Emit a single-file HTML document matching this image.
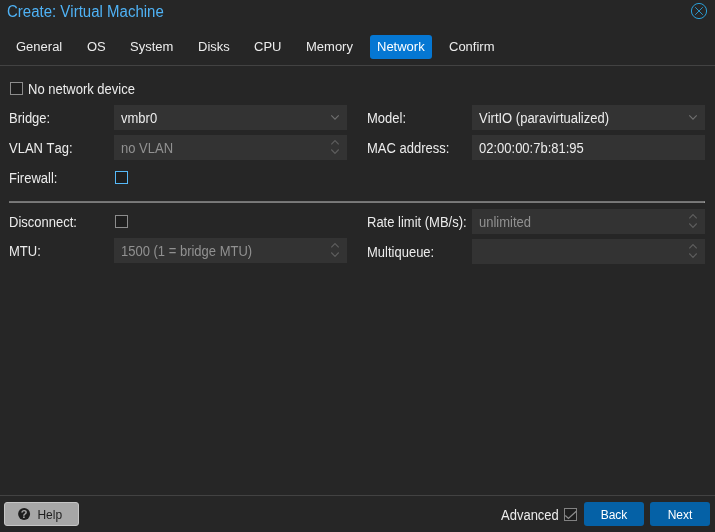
<!DOCTYPE html>
<html><head><meta charset="utf-8">
<style>
*{box-sizing:border-box;margin:0;padding:0}
html,body{font-kerning:none;width:715px;height:532px;overflow:hidden;background:#262626;font-family:"Liberation Sans",Helvetica,Arial,sans-serif;color:#ececec;font-size:13px}
#win{will-change:transform;position:relative;width:715px;height:532px;background:#262626}
.abs{position:absolute}
#title{transform:scaleY(1.04);transform-origin:0 14px;left:7px;top:3px;font-size:15px;line-height:18px;color:#4fb2f5;white-space:nowrap}
#tabbar{left:0;top:29px;width:715px;height:37px;border-bottom:1px solid #424242}
.tab{position:absolute;top:6px;height:24px;line-height:24px;font-size:13px;color:#ececec;padding:0 8px;border-radius:3px;white-space:nowrap}
.tab span{display:inline-block;transform:scaleY(1.04);transform-origin:0 16.5px}
.tab.act{background:#0577d3;color:#fff;padding:0 7px}
.lbl{transform:scaleY(1.065);transform-origin:0 16.5px;position:absolute;font-size:13px;line-height:24px;height:24px;color:#ececec;white-space:nowrap}
.fld{position:absolute;height:25px;background:#333;font-size:13px;line-height:25px;color:#ececec;padding-left:7px;white-space:nowrap}
.fld span{position:relative;top:1px;display:inline-block;transform:scaleY(1.065);transform-origin:0 17.3px}
.fld.dis{color:#919191}
.cb{position:absolute;width:13px;height:13px;border:1px solid #8c8c8c;background:#1e1e1e}
.cb.foc{border-color:#56b9f8}
#hr{left:9px;top:201px;width:696px;height:2px;background:#7a7a7a;border-top:1px solid #747474;border-right:1px solid #969696}
#foot{left:0;top:495px;width:715px;height:1px;background:#424242}
.btn{position:absolute;top:502px;height:24px;line-height:26px;font-size:12px;border-radius:3px;text-align:center;white-space:nowrap}
.btn.blue{background:#0561a6;color:#fff}
#help{left:4px;width:75px;background:#a7a7a7;color:#1e1e1e;border:1px solid #c6c6c6}
svg{position:absolute;overflow:visible}
</style></head><body>
<div id="win">
<div id="title" class="abs">Create: Virtual Machine</div>
<svg style="left:691px;top:3px" width="16" height="16" viewBox="0 0 16 16"><circle cx="8" cy="8" r="7.6" fill="none" stroke="#2b9fd8" stroke-width="1"/><path d="M4.2 4.2 L11.8 11.8 M11.8 4.2 L4.2 11.8" stroke="#2b9fd8" stroke-width="0.9" fill="none"/></svg>

<div id="tabbar" class="abs">
<div class="tab" style="left:8px"><span>General</span></div>
<div class="tab" style="left:79px"><span>OS</span></div>
<div class="tab" style="left:122px"><span>System</span></div>
<div class="tab" style="left:190px"><span>Disks</span></div>
<div class="tab" style="left:246px"><span>CPU</span></div>
<div class="tab" style="left:298px"><span>Memory</span></div>
<div class="tab act" style="left:370px"><span>Network</span></div>
<div class="tab" style="left:441px"><span>Confirm</span></div>
</div>

<div class="cb" style="left:10px;top:82px"></div>
<div class="lbl" style="left:28px;top:78px">No network device</div>

<div class="lbl" style="left:9px;top:107px">Bridge:</div>
<div class="fld" style="left:114px;top:105px;width:233px"><span>vmbr0</span></div>
<svg style="left:330px;top:105px" width="10" height="25" viewBox="0 0 10 25"><path d="M1.3 10.4 L5 14.2 L8.7 10.4" stroke="#707070" stroke-width="1.1" fill="none"/></svg>

<div class="lbl" style="left:9px;top:137px">VLAN Tag:</div>
<div class="fld dis" style="left:114px;top:135px;width:233px"><span>no VLAN</span></div>
<svg style="left:330px;top:135px" width="10" height="25" viewBox="0 0 10 25"><path d="M1.3 9.4 L5 5.5 L8.7 9.4 M1.3 14.5 L5 18.4 L8.7 14.5" stroke="#5e5e5e" stroke-width="1.1" fill="none"/></svg>

<div class="lbl" style="left:9px;top:167px">Firewall:</div>
<div class="cb foc" style="left:115px;top:171px"></div>

<div class="lbl" style="left:367px;top:107px">Model:</div>
<div class="fld" style="left:472px;top:105px;width:233px"><span>VirtIO (paravirtualized)</span></div>
<svg style="left:688px;top:105px" width="10" height="25" viewBox="0 0 10 25"><path d="M1.3 10.4 L5 14.2 L8.7 10.4" stroke="#707070" stroke-width="1.1" fill="none"/></svg>

<div class="lbl" style="left:367px;top:137px">MAC address:</div>
<div class="fld" style="left:472px;top:135px;width:233px"><span>02:00:00:7b:81:95</span></div>

<div id="hr" class="abs"></div>

<div class="lbl" style="left:9px;top:211px">Disconnect:</div>
<div class="cb" style="left:115px;top:215px"></div>

<div class="lbl" style="left:9px;top:240px">MTU:</div>
<div class="fld dis" style="left:114px;top:238px;width:233px"><span>1500 (1 = bridge MTU)</span></div>
<svg style="left:330px;top:238px" width="10" height="25" viewBox="0 0 10 25"><path d="M1.3 9.4 L5 5.5 L8.7 9.4 M1.3 14.5 L5 18.4 L8.7 14.5" stroke="#5e5e5e" stroke-width="1.1" fill="none"/></svg>

<div class="lbl" style="left:367px;top:211px">Rate limit (MB/s):</div>
<div class="fld dis" style="left:472px;top:209px;width:233px"><span>unlimited</span></div>
<svg style="left:688px;top:209px" width="10" height="25" viewBox="0 0 10 25"><path d="M1.3 9.4 L5 5.5 L8.7 9.4 M1.3 14.5 L5 18.4 L8.7 14.5" stroke="#5e5e5e" stroke-width="1.1" fill="none"/></svg>

<div class="lbl" style="left:367px;top:241px">Multiqueue:</div>
<div class="fld dis" style="left:472px;top:239px;width:233px"></div>
<svg style="left:688px;top:239px" width="10" height="25" viewBox="0 0 10 25"><path d="M1.3 9.4 L5 5.5 L8.7 9.4 M1.3 14.5 L5 18.4 L8.7 14.5" stroke="#5e5e5e" stroke-width="1.1" fill="none"/></svg>

<div id="foot" class="abs"></div>
<div id="help" class="btn"><span style="position:absolute;left:32.4px;top:-1px">Help</span></div>
<svg style="left:18px;top:508px" width="12" height="12" viewBox="0 0 12 12"><circle cx="6.1" cy="6" r="6" fill="#1e1e1e"/><text x="6.1" y="10" font-size="11" font-weight="bold" text-anchor="middle" fill="#a7a7a7" font-family="Liberation Sans, sans-serif">?</text></svg>

<div class="lbl" style="left:501px;top:504px">Advanced</div>
<div class="cb" style="left:564px;top:508px;border-color:#828282"></div>
<svg style="left:564px;top:508px" width="13" height="13" viewBox="0 0 13 13"><path d="M1.3 7.6 L4.4 10.4 L12.6 2.9" stroke="#8c8c8c" stroke-width="1.3" fill="none"/></svg>
<div class="btn blue" style="left:584px;width:60px">Back</div>
<div class="btn blue" style="left:650px;width:60px">Next</div>
</div>
</body></html>
